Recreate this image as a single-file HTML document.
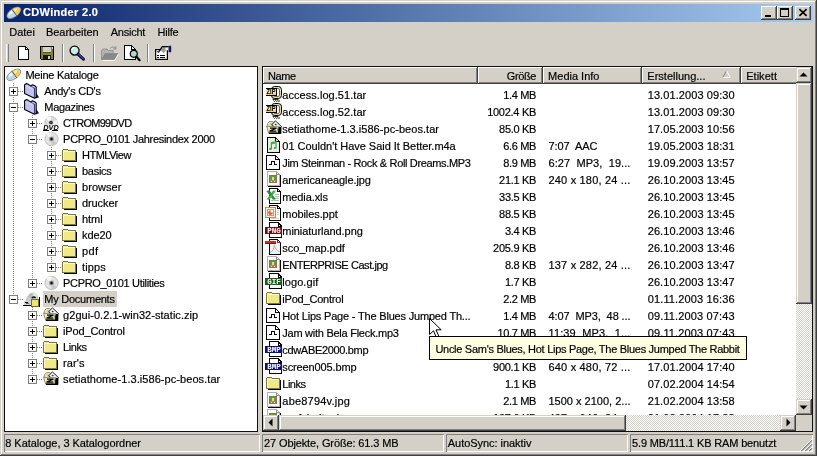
<!DOCTYPE html><html lang="de"><head><meta charset="utf-8"><title>CDWinder 2.0</title><style>

html,body{margin:0;padding:0}
body{width:817px;height:456px;background:#d4d0c8;overflow:hidden;position:relative;font:11px "Liberation Sans",sans-serif;color:#000}
.r,.t,.i{position:absolute}
.t{white-space:pre;line-height:17px;height:17px;-webkit-text-stroke:.18px}
svg{shape-rendering:crispEdges;overflow:visible}
.btn{position:absolute;background:#d4d0c8;box-shadow:inset -1px -1px #404040,inset 1px 1px #d4d0c8,inset -2px -2px #808080,inset 2px 2px #fff}
.cap{position:absolute;background:#d4d0c8;box-shadow:inset -1px -1px #404040,inset 1px 1px #fff,inset -2px -2px #808080,inset 2px 2px #d4d0c8}
.hd{position:absolute;top:67px;height:17px;background:#d4d0c8;box-shadow:inset -1px -1px #404040,inset 1px 1px #fff,inset -2px -2px #808080}
.sp{position:absolute;top:434px;height:18px;box-shadow:inset 1px 1px #808080,inset -1px -1px #fff}
.dither{position:absolute;background:repeating-conic-gradient(#fff 0 25%,#d4d0c8 0 50%) 0 0/2px 2px}
.clip{position:absolute;overflow:hidden}

</style></head><body><div id="w" style="position:absolute;left:0;top:0;width:817px;height:456px;will-change:transform">
<div class="r" style="left:0px;top:0px;width:817px;height:456px;background:#d4d0c8;"></div>
<div class="r" style="left:1px;top:1px;width:814px;height:1px;background:#fff;"></div>
<div class="r" style="left:1px;top:1px;width:1px;height:453px;background:#fff;"></div>
<div class="r" style="left:815px;top:1px;width:1px;height:454px;background:#808080;"></div>
<div class="r" style="left:1px;top:454px;width:815px;height:1px;background:#808080;"></div>
<div class="r" style="left:816px;top:0px;width:1px;height:456px;background:#404040;"></div>
<div class="r" style="left:0px;top:455px;width:817px;height:1px;background:#404040;"></div>
<div class="r" style="left:4px;top:4px;width:809px;height:18px;background:#0a246a;background:linear-gradient(90deg,#0a246a,#a6caf0)"></div>
<svg class="i" style="left:6px;top:5px" width="16" height="16" viewBox="0 0 16 16" ><g shape-rendering="auto" transform="rotate(-36 7.8 7.8)"><ellipse cx="7.8" cy="7.8" rx="8" ry="4.1" fill="#c4d4e4" stroke="#788c9e" stroke-width=".8"/><path d="M8.4 3.8A8 4.1 0 0 1 8.4 11.8Z" fill="#f0cc54"/><path d="M8.4 3.6V12" stroke="#4a4a40" stroke-width=".8"/><path d="M2 7A6 3 0 0 1 7.2 4.6L7.2 7.6Z" fill="#eef4fa"/><path d="M9.4 5.2L14 6L10 8Z" fill="#fdf0b4"/></g></svg>
<div class="cap" style="left:761px;top:6px;width:16px;height:14px"></div>
<div class="cap" style="left:777px;top:6px;width:16px;height:14px"></div>
<div class="cap" style="left:795px;top:6px;width:16px;height:14px"></div>
<div class="r" style="left:765px;top:15px;width:6px;height:2px;background:#000;"></div>
<div class="r" style="left:780px;top:8px;width:9px;height:9px;background:transparent;box-sizing:border-box;border:1px solid #000;border-top-width:2px"></div>
<svg class="i" style="left:795px;top:6px" width="16" height="14" viewBox="0 0 16 14" ><path d="M4.4 3.2L11.6 9.8M11.6 3.2L4.4 9.8" stroke="#000" stroke-width="1.7" fill="none" shape-rendering="auto"/></svg>
<div class="r" style="left:6px;top:44px;width:1px;height:18px;background:#fff;"></div>
<div class="r" style="left:7px;top:44px;width:1px;height:18px;background:#d4d0c8;"></div>
<div class="r" style="left:8px;top:44px;width:1px;height:18px;background:#808080;"></div>
<div class="r" style="left:62px;top:44px;width:1px;height:18px;background:#808080;"></div>
<div class="r" style="left:63px;top:44px;width:1px;height:18px;background:#fff;"></div>
<div class="r" style="left:93px;top:44px;width:1px;height:18px;background:#808080;"></div>
<div class="r" style="left:94px;top:44px;width:1px;height:18px;background:#fff;"></div>
<div class="r" style="left:147px;top:44px;width:1px;height:18px;background:#808080;"></div>
<div class="r" style="left:148px;top:44px;width:1px;height:18px;background:#fff;"></div>
<svg class="i" style="left:17px;top:45px" width="16" height="16" viewBox="0 0 16 16" ><path d="M1.5 1.5H8.5L11.5 4.5V14.5H1.5Z" fill="#fff" stroke="#000"/><path d="M8.5 1.5V4.5H11.5" fill="none" stroke="#000"/></svg>
<svg class="i" style="left:40px;top:46px" width="15" height="15" viewBox="0 0 15 15" ><path d="M.5 .5H13.5V13.5H1.5L.5 12.5Z" fill="#808040" stroke="#000"/><rect x="3" y="1" width="8" height="6" fill="#d4d0c8"/><rect x="3" y="6" width="8" height="1" fill="#585828"/><rect x="3" y="9" width="8" height="4" fill="#181808"/><rect x="8" y="10" width="2" height="3" fill="#d4d0c8"/><rect x="12" y="1" width="1" height="2" fill="#d4d0c8"/></svg>
<svg class="i" style="left:69px;top:44px" width="18" height="18" viewBox="0 0 18 18" ><g shape-rendering="auto"><circle cx="5.6" cy="6.6" r="4.5" fill="#c6ece6" stroke="#000" stroke-width="1.3"/><path d="M3.2 5.4A3 3 0 0 1 6.4 3.6" stroke="#fff" stroke-width="1.1" fill="none"/><path d="M9 10.2L14.4 15.2" stroke="#000" stroke-width="3" stroke-linecap="round"/><path d="M9.4 10.2L14.4 14.8" stroke="#3c3cc4" stroke-width="1.3" stroke-linecap="round"/></g></svg>
<svg class="i" style="left:101px;top:45px" width="18" height="16" viewBox="0 0 18 16" ><g shape-rendering="auto"><path d="M.5 14.5V5.5L2 4H6L7.5 5.5H12V8" fill="#b4b4b4" stroke="#909090"/><path d="M.8 14.5L4 8.5H17L13.5 14.5Z" fill="#888" stroke="#808080" stroke-width=".6"/><path d="M9 3.5C10.5 1.5 13 1.5 14.5 3.5M14.8 1.2V4H12" fill="none" stroke="#909090" stroke-width="1.1"/><path d="M1.5 15.5H13.5L17.5 9" fill="none" stroke="#fff" stroke-width=".9"/></g></svg>
<svg class="i" style="left:124px;top:44px" width="17" height="18" viewBox="0 0 17 18" ><path d="M.5 1.5H7.5L11.5 5.5V15.5H.5Z" fill="#fff" stroke="#000"/><path d="M7.5 1.5V5.5H11.5" fill="none" stroke="#000"/><g shape-rendering="auto"><circle cx="9.8" cy="9.8" r="3.5" fill="#a8dcd0" stroke="#000" stroke-width="1.2"/><path d="M12.3 12.6L15.6 16.2" stroke="#000" stroke-width="2.2" stroke-linecap="round"/></g></svg>
<svg class="i" style="left:155px;top:45px" width="17" height="16" viewBox="0 0 17 16" ><rect x=".6" y="4.6" width="11.8" height="9.8" fill="#fff" stroke="#000" stroke-width="1.2" shape-rendering="auto"/><path d="M2 10.5H4M5 10.5H10M2 12.5H4M5 12.5H10" stroke="#000"/><g shape-rendering="auto"><path d="M3.6 7.2L7.2 1.6H13.5V5L11 5.6L8.6 8.2L6.2 5.6Z" fill="#9c9c9c"/><path d="M10.4 2.4H13.6V5.2H10.4Z" fill="#ececfa"/><path d="M3.4 7.4L7.2 1.6H13.6" fill="none" stroke="#000" stroke-width="1.1"/><path d="M2 6.2L3.2 7.6" stroke="#000" stroke-width="1"/><path d="M13.6 .8H16.2V7.2H13.6Z" fill="#16164e"/></g></svg>
<div class="r" style="left:4px;top:66px;width:254px;height:366px;background:#101010;"></div>
<div class="r" style="left:5px;top:67px;width:252px;height:364px;background:#fff;"></div>
<div class="r" style="left:13px;top:83px;width:1px;height:216px;background:repeating-linear-gradient(180deg,#808080 0 1px,#fff 1px 2px)"></div>
<div class="r" style="left:32px;top:115px;width:1px;height:168px;background:repeating-linear-gradient(180deg,#808080 0 1px,#fff 1px 2px)"></div>
<div class="r" style="left:51px;top:147px;width:1px;height:120px;background:repeating-linear-gradient(180deg,#808080 0 1px,#fff 1px 2px)"></div>
<div class="r" style="left:32px;top:307px;width:1px;height:72px;background:repeating-linear-gradient(180deg,#808080 0 1px,#fff 1px 2px)"></div>
<svg class="i" style="left:6px;top:67px" width="16" height="16" viewBox="0 0 16 16" ><g shape-rendering="auto" transform="rotate(-36 7.8 7.8)"><ellipse cx="7.8" cy="7.8" rx="8" ry="4.1" fill="#c4d4e4" stroke="#788c9e" stroke-width=".8"/><path d="M8.4 3.8A8 4.1 0 0 1 8.4 11.8Z" fill="#f0cc54"/><path d="M8.4 3.6V12" stroke="#4a4a40" stroke-width=".8"/><path d="M2 7A6 3 0 0 1 7.2 4.6L7.2 7.6Z" fill="#eef4fa"/><path d="M9.4 5.2L14 6L10 8Z" fill="#fdf0b4"/></g></svg>
<div class="r" style="left:14px;top:91px;width:10px;height:1px;background:repeating-linear-gradient(90deg,#808080 0 1px,#fff 1px 2px)"></div>
<div class="r" style="left:9px;top:87px;width:9px;height:9px;background:#fff;box-sizing:border-box;border:1px solid #808080"></div>
<div class="r" style="left:11px;top:91px;width:5px;height:1px;background:#000;"></div>
<div class="r" style="left:13px;top:89px;width:1px;height:5px;background:#000;"></div>
<svg class="i" style="left:24px;top:83px" width="16" height="16" viewBox="0 0 16 16" ><g shape-rendering="auto"><path d="M12 9.5L15 14.2L11.5 15.4Z" fill="#101018"/><path d="M.6 1.8L2.6 .5L4.6 1.6L6.6 2.9L8.6 1.7L11 2.9L12.2 4.2V14.6L10.4 15.3L.6 10.6Z" fill="#c2c2f2" stroke="#000" stroke-width="1.1" stroke-linejoin="round"/><path d="M10.3 5.2V15" stroke="#181850" stroke-width="1"/><path d="M4.6 1.8L10.3 5.2" stroke="#303068" stroke-width=".7"/><path d="M1.6 3L9.4 6.4V13.4" fill="none" stroke="#dcdcfa" stroke-width=".7"/></g></svg>
<div class="r" style="left:14px;top:107px;width:10px;height:1px;background:repeating-linear-gradient(90deg,#808080 0 1px,#fff 1px 2px)"></div>
<div class="r" style="left:9px;top:103px;width:9px;height:9px;background:#fff;box-sizing:border-box;border:1px solid #808080"></div>
<div class="r" style="left:11px;top:107px;width:5px;height:1px;background:#000;"></div>
<svg class="i" style="left:24px;top:99px" width="16" height="16" viewBox="0 0 16 16" ><g shape-rendering="auto"><path d="M12 9.5L15 14.2L11.5 15.4Z" fill="#101018"/><path d="M.6 1.8L2.6 .5L4.6 1.6L6.6 2.9L8.6 1.7L11 2.9L12.2 4.2V14.6L10.4 15.3L.6 10.6Z" fill="#c2c2f2" stroke="#000" stroke-width="1.1" stroke-linejoin="round"/><path d="M10.3 5.2V15" stroke="#181850" stroke-width="1"/><path d="M4.6 1.8L10.3 5.2" stroke="#303068" stroke-width=".7"/><path d="M1.6 3L9.4 6.4V13.4" fill="none" stroke="#dcdcfa" stroke-width=".7"/></g></svg>
<div class="r" style="left:33px;top:123px;width:10px;height:1px;background:repeating-linear-gradient(90deg,#808080 0 1px,#fff 1px 2px)"></div>
<div class="r" style="left:28px;top:119px;width:9px;height:9px;background:#fff;box-sizing:border-box;border:1px solid #808080"></div>
<div class="r" style="left:30px;top:123px;width:5px;height:1px;background:#000;"></div>
<div class="r" style="left:32px;top:121px;width:1px;height:5px;background:#000;"></div>
<svg class="i" style="left:43px;top:115px" width="16" height="16" viewBox="0 0 16 16" ><g shape-rendering="auto"><circle cx="8" cy="7.6" r="6.2" fill="#dcdcdc" stroke="#b8b8b8" stroke-width=".8"/><path d="M8 7.6L3 3.6A6.5 6.5 0 0 1 8 1.2Z" fill="#f8f8f8"/><path d="M8 7.6L13.6 5A6.5 6.5 0 0 1 14 10Z" fill="#f0f0f0"/><circle cx="8" cy="7.6" r="2.1" fill="#8c8c8c"/><circle cx="8" cy="7.6" r="1.5" fill="#101010"/><circle cx="8" cy="7.6" r=".6" fill="#b0b0b0"/><rect x="0" y="9.6" width="16" height="5.8" fill="#fff" opacity=".6"/></g><text x="8" y="14.6" text-anchor="middle" font-family="Liberation Sans, sans-serif" font-size="6.8" font-weight="bold" font-style="italic" fill="#000" textLength="15.4" lengthAdjust="spacingAndGlyphs">DVD</text><rect x="0" y="15" width="6" height="1" fill="#000"/><rect x="9" y="15" width="6" height="1" fill="#000"/></svg>
<div class="r" style="left:33px;top:139px;width:10px;height:1px;background:repeating-linear-gradient(90deg,#808080 0 1px,#fff 1px 2px)"></div>
<div class="r" style="left:28px;top:135px;width:9px;height:9px;background:#fff;box-sizing:border-box;border:1px solid #808080"></div>
<div class="r" style="left:30px;top:139px;width:5px;height:1px;background:#000;"></div>
<svg class="i" style="left:43px;top:131px" width="16" height="16" viewBox="0 0 16 16" ><g shape-rendering="auto"><circle cx="8.5" cy="8" r="6.6" fill="#e2e2e2" stroke="#b4b4b4" stroke-width=".8"/><path d="M8.5 8L3 3.5A7 7 0 0 1 8.5 1.4Z" fill="#f6f6f6"/><path d="M8.5 8L14 12.5A7 7 0 0 1 8.5 14.6Z" fill="#c8c8c8"/><circle cx="8.5" cy="8" r="2.4" fill="#8c8c8c"/><circle cx="8.5" cy="8" r="1.2" fill="#101010"/></g></svg>
<div class="r" style="left:52px;top:155px;width:10px;height:1px;background:repeating-linear-gradient(90deg,#808080 0 1px,#fff 1px 2px)"></div>
<div class="r" style="left:47px;top:151px;width:9px;height:9px;background:#fff;box-sizing:border-box;border:1px solid #808080"></div>
<div class="r" style="left:49px;top:155px;width:5px;height:1px;background:#000;"></div>
<div class="r" style="left:51px;top:153px;width:1px;height:5px;background:#000;"></div>
<svg class="i" style="left:62px;top:147px" width="16" height="16" viewBox="0 0 16 16" ><path d="M.5 13.5V3.5L1.5 2.5H5.5L6.5 3.5H13.5V13.5Z" fill="#efe98c" stroke="#7c783a"/><path d="M14.5 4.5V14.5H1.5" fill="none" stroke="#000"/><path d="M1.5 12.5V4.5H12.5" fill="none" stroke="#fbf8d0"/></svg>
<div class="r" style="left:52px;top:171px;width:10px;height:1px;background:repeating-linear-gradient(90deg,#808080 0 1px,#fff 1px 2px)"></div>
<div class="r" style="left:47px;top:167px;width:9px;height:9px;background:#fff;box-sizing:border-box;border:1px solid #808080"></div>
<div class="r" style="left:49px;top:171px;width:5px;height:1px;background:#000;"></div>
<div class="r" style="left:51px;top:169px;width:1px;height:5px;background:#000;"></div>
<svg class="i" style="left:62px;top:163px" width="16" height="16" viewBox="0 0 16 16" ><path d="M.5 13.5V3.5L1.5 2.5H5.5L6.5 3.5H13.5V13.5Z" fill="#efe98c" stroke="#7c783a"/><path d="M14.5 4.5V14.5H1.5" fill="none" stroke="#000"/><path d="M1.5 12.5V4.5H12.5" fill="none" stroke="#fbf8d0"/></svg>
<div class="r" style="left:52px;top:187px;width:10px;height:1px;background:repeating-linear-gradient(90deg,#808080 0 1px,#fff 1px 2px)"></div>
<div class="r" style="left:47px;top:183px;width:9px;height:9px;background:#fff;box-sizing:border-box;border:1px solid #808080"></div>
<div class="r" style="left:49px;top:187px;width:5px;height:1px;background:#000;"></div>
<div class="r" style="left:51px;top:185px;width:1px;height:5px;background:#000;"></div>
<svg class="i" style="left:62px;top:179px" width="16" height="16" viewBox="0 0 16 16" ><path d="M.5 13.5V3.5L1.5 2.5H5.5L6.5 3.5H13.5V13.5Z" fill="#efe98c" stroke="#7c783a"/><path d="M14.5 4.5V14.5H1.5" fill="none" stroke="#000"/><path d="M1.5 12.5V4.5H12.5" fill="none" stroke="#fbf8d0"/></svg>
<div class="r" style="left:52px;top:203px;width:10px;height:1px;background:repeating-linear-gradient(90deg,#808080 0 1px,#fff 1px 2px)"></div>
<div class="r" style="left:47px;top:199px;width:9px;height:9px;background:#fff;box-sizing:border-box;border:1px solid #808080"></div>
<div class="r" style="left:49px;top:203px;width:5px;height:1px;background:#000;"></div>
<div class="r" style="left:51px;top:201px;width:1px;height:5px;background:#000;"></div>
<svg class="i" style="left:62px;top:195px" width="16" height="16" viewBox="0 0 16 16" ><path d="M.5 13.5V3.5L1.5 2.5H5.5L6.5 3.5H13.5V13.5Z" fill="#efe98c" stroke="#7c783a"/><path d="M14.5 4.5V14.5H1.5" fill="none" stroke="#000"/><path d="M1.5 12.5V4.5H12.5" fill="none" stroke="#fbf8d0"/></svg>
<div class="r" style="left:52px;top:219px;width:10px;height:1px;background:repeating-linear-gradient(90deg,#808080 0 1px,#fff 1px 2px)"></div>
<div class="r" style="left:47px;top:215px;width:9px;height:9px;background:#fff;box-sizing:border-box;border:1px solid #808080"></div>
<div class="r" style="left:49px;top:219px;width:5px;height:1px;background:#000;"></div>
<div class="r" style="left:51px;top:217px;width:1px;height:5px;background:#000;"></div>
<svg class="i" style="left:62px;top:211px" width="16" height="16" viewBox="0 0 16 16" ><path d="M.5 13.5V3.5L1.5 2.5H5.5L6.5 3.5H13.5V13.5Z" fill="#efe98c" stroke="#7c783a"/><path d="M14.5 4.5V14.5H1.5" fill="none" stroke="#000"/><path d="M1.5 12.5V4.5H12.5" fill="none" stroke="#fbf8d0"/></svg>
<div class="r" style="left:52px;top:235px;width:10px;height:1px;background:repeating-linear-gradient(90deg,#808080 0 1px,#fff 1px 2px)"></div>
<div class="r" style="left:47px;top:231px;width:9px;height:9px;background:#fff;box-sizing:border-box;border:1px solid #808080"></div>
<div class="r" style="left:49px;top:235px;width:5px;height:1px;background:#000;"></div>
<div class="r" style="left:51px;top:233px;width:1px;height:5px;background:#000;"></div>
<svg class="i" style="left:62px;top:227px" width="16" height="16" viewBox="0 0 16 16" ><path d="M.5 13.5V3.5L1.5 2.5H5.5L6.5 3.5H13.5V13.5Z" fill="#efe98c" stroke="#7c783a"/><path d="M14.5 4.5V14.5H1.5" fill="none" stroke="#000"/><path d="M1.5 12.5V4.5H12.5" fill="none" stroke="#fbf8d0"/></svg>
<div class="r" style="left:52px;top:251px;width:10px;height:1px;background:repeating-linear-gradient(90deg,#808080 0 1px,#fff 1px 2px)"></div>
<div class="r" style="left:47px;top:247px;width:9px;height:9px;background:#fff;box-sizing:border-box;border:1px solid #808080"></div>
<div class="r" style="left:49px;top:251px;width:5px;height:1px;background:#000;"></div>
<div class="r" style="left:51px;top:249px;width:1px;height:5px;background:#000;"></div>
<svg class="i" style="left:62px;top:243px" width="16" height="16" viewBox="0 0 16 16" ><path d="M.5 13.5V3.5L1.5 2.5H5.5L6.5 3.5H13.5V13.5Z" fill="#efe98c" stroke="#7c783a"/><path d="M14.5 4.5V14.5H1.5" fill="none" stroke="#000"/><path d="M1.5 12.5V4.5H12.5" fill="none" stroke="#fbf8d0"/></svg>
<div class="r" style="left:52px;top:267px;width:10px;height:1px;background:repeating-linear-gradient(90deg,#808080 0 1px,#fff 1px 2px)"></div>
<div class="r" style="left:47px;top:263px;width:9px;height:9px;background:#fff;box-sizing:border-box;border:1px solid #808080"></div>
<div class="r" style="left:49px;top:267px;width:5px;height:1px;background:#000;"></div>
<div class="r" style="left:51px;top:265px;width:1px;height:5px;background:#000;"></div>
<svg class="i" style="left:62px;top:259px" width="16" height="16" viewBox="0 0 16 16" ><path d="M.5 13.5V3.5L1.5 2.5H5.5L6.5 3.5H13.5V13.5Z" fill="#efe98c" stroke="#7c783a"/><path d="M14.5 4.5V14.5H1.5" fill="none" stroke="#000"/><path d="M1.5 12.5V4.5H12.5" fill="none" stroke="#fbf8d0"/></svg>
<div class="r" style="left:33px;top:283px;width:10px;height:1px;background:repeating-linear-gradient(90deg,#808080 0 1px,#fff 1px 2px)"></div>
<div class="r" style="left:28px;top:279px;width:9px;height:9px;background:#fff;box-sizing:border-box;border:1px solid #808080"></div>
<div class="r" style="left:30px;top:283px;width:5px;height:1px;background:#000;"></div>
<div class="r" style="left:32px;top:281px;width:1px;height:5px;background:#000;"></div>
<svg class="i" style="left:43px;top:275px" width="16" height="16" viewBox="0 0 16 16" ><g shape-rendering="auto"><circle cx="8.5" cy="8" r="6.6" fill="#e2e2e2" stroke="#b4b4b4" stroke-width=".8"/><path d="M8.5 8L3 3.5A7 7 0 0 1 8.5 1.4Z" fill="#f6f6f6"/><path d="M8.5 8L14 12.5A7 7 0 0 1 8.5 14.6Z" fill="#c8c8c8"/><circle cx="8.5" cy="8" r="2.4" fill="#8c8c8c"/><circle cx="8.5" cy="8" r="1.2" fill="#101010"/></g></svg>
<div class="r" style="left:14px;top:299px;width:10px;height:1px;background:repeating-linear-gradient(90deg,#808080 0 1px,#fff 1px 2px)"></div>
<div class="r" style="left:9px;top:295px;width:9px;height:9px;background:#fff;box-sizing:border-box;border:1px solid #808080"></div>
<div class="r" style="left:11px;top:299px;width:5px;height:1px;background:#000;"></div>
<div class="r" style="left:43px;top:291px;width:74px;height:16px;background:#d4d0c8;"></div>
<svg class="i" style="left:24px;top:291px" width="16" height="16" viewBox="0 0 16 16" ><g shape-rendering="auto"><path d="M2 9.5C2.4 4.6 6 1.4 9 1.4C11.6 1.4 13.6 3 14 5V8H7V10H2Z" fill="#c6cac6"/><path d="M8.5 7.5L9.6 1.6C11.6 1.8 13.4 3.2 13.8 5Z" fill="#e6e8e6"/><path d="M4 6C5 3.6 7 2.2 8.6 2L8 6.4Z" fill="#b4bcb4"/><path d="M7.8 7.2Q9.6 5 11.6 6.8" fill="none" stroke="#000" stroke-width="1.3"/></g><rect x="0" y="10" width="7" height="4" fill="#d2d2d2"/><rect x="-1" y="14" width="8" height="1" fill="#000"/><rect x="1" y="11" width="3" height="1" fill="#000"/><rect x="2" y="12" width="3" height="1" fill="#606060"/><path d="M7.5 15.5V8.5H14.5V15.5Z" fill="#ece66e" stroke="#6e6e34"/><path d="M15.5 6V16" stroke="#000"/></svg>
<div class="r" style="left:33px;top:315px;width:10px;height:1px;background:repeating-linear-gradient(90deg,#808080 0 1px,#fff 1px 2px)"></div>
<div class="r" style="left:28px;top:311px;width:9px;height:9px;background:#fff;box-sizing:border-box;border:1px solid #808080"></div>
<div class="r" style="left:30px;top:315px;width:5px;height:1px;background:#000;"></div>
<div class="r" style="left:32px;top:313px;width:1px;height:5px;background:#000;"></div>
<svg class="i" style="left:43px;top:307px" width="16" height="16" viewBox="0 0 16 16" ><g shape-rendering="auto"><path d="M1 7L1.6 3.4L3.4 1.6H7L8.6 3.4H12.6L13 7Z" fill="#e6e6c6" stroke="#8a8a64" stroke-width=".9"/><path d="M3 4.6L4.6 3H6.4L4.6 4.8Z" fill="#c8c890"/><path d="M9.4 .8L15.6 6.8L12.4 9.4L5.6 5Z" fill="#fff" stroke="#000" stroke-width=".9"/><path d="M9.6 3.4L11 4.8L9.8 5.6L8.4 4.6Z" fill="#2a2a98"/><path d="M12.4 6.6L15.4 7.2V13.8H12Z" fill="#000"/><path d="M.6 6.4H12.4L10.8 12.6H2.4Z" fill="#ecedb4" stroke="#7e7e58" stroke-width=".8"/><path d="M2.4 12.4H14.6V13.9H3Z" fill="#000"/><path d="M4 7.4H10.6V8.7L6.6 10.4H10.2V11.8H3.4V10.5L7.4 8.8H4Z" fill="#000"/></g></svg>
<div class="r" style="left:33px;top:331px;width:10px;height:1px;background:repeating-linear-gradient(90deg,#808080 0 1px,#fff 1px 2px)"></div>
<div class="r" style="left:28px;top:327px;width:9px;height:9px;background:#fff;box-sizing:border-box;border:1px solid #808080"></div>
<div class="r" style="left:30px;top:331px;width:5px;height:1px;background:#000;"></div>
<div class="r" style="left:32px;top:329px;width:1px;height:5px;background:#000;"></div>
<svg class="i" style="left:43px;top:323px" width="16" height="16" viewBox="0 0 16 16" ><path d="M.5 13.5V3.5L1.5 2.5H5.5L6.5 3.5H13.5V13.5Z" fill="#efe98c" stroke="#7c783a"/><path d="M14.5 4.5V14.5H1.5" fill="none" stroke="#000"/><path d="M1.5 12.5V4.5H12.5" fill="none" stroke="#fbf8d0"/></svg>
<div class="r" style="left:33px;top:347px;width:10px;height:1px;background:repeating-linear-gradient(90deg,#808080 0 1px,#fff 1px 2px)"></div>
<div class="r" style="left:28px;top:343px;width:9px;height:9px;background:#fff;box-sizing:border-box;border:1px solid #808080"></div>
<div class="r" style="left:30px;top:347px;width:5px;height:1px;background:#000;"></div>
<div class="r" style="left:32px;top:345px;width:1px;height:5px;background:#000;"></div>
<svg class="i" style="left:43px;top:339px" width="16" height="16" viewBox="0 0 16 16" ><path d="M.5 13.5V3.5L1.5 2.5H5.5L6.5 3.5H13.5V13.5Z" fill="#efe98c" stroke="#7c783a"/><path d="M14.5 4.5V14.5H1.5" fill="none" stroke="#000"/><path d="M1.5 12.5V4.5H12.5" fill="none" stroke="#fbf8d0"/></svg>
<div class="r" style="left:33px;top:363px;width:10px;height:1px;background:repeating-linear-gradient(90deg,#808080 0 1px,#fff 1px 2px)"></div>
<div class="r" style="left:28px;top:359px;width:9px;height:9px;background:#fff;box-sizing:border-box;border:1px solid #808080"></div>
<div class="r" style="left:30px;top:363px;width:5px;height:1px;background:#000;"></div>
<div class="r" style="left:32px;top:361px;width:1px;height:5px;background:#000;"></div>
<svg class="i" style="left:43px;top:355px" width="16" height="16" viewBox="0 0 16 16" ><path d="M.5 13.5V3.5L1.5 2.5H5.5L6.5 3.5H13.5V13.5Z" fill="#efe98c" stroke="#7c783a"/><path d="M14.5 4.5V14.5H1.5" fill="none" stroke="#000"/><path d="M1.5 12.5V4.5H12.5" fill="none" stroke="#fbf8d0"/></svg>
<div class="r" style="left:33px;top:379px;width:10px;height:1px;background:repeating-linear-gradient(90deg,#808080 0 1px,#fff 1px 2px)"></div>
<div class="r" style="left:28px;top:375px;width:9px;height:9px;background:#fff;box-sizing:border-box;border:1px solid #808080"></div>
<div class="r" style="left:30px;top:379px;width:5px;height:1px;background:#000;"></div>
<div class="r" style="left:32px;top:377px;width:1px;height:5px;background:#000;"></div>
<svg class="i" style="left:43px;top:371px" width="16" height="16" viewBox="0 0 16 16" ><g shape-rendering="auto"><path d="M1 7L1.6 3.4L3.4 1.6H7L8.6 3.4H12.6L13 7Z" fill="#e6e6c6" stroke="#8a8a64" stroke-width=".9"/><path d="M3 4.6L4.6 3H6.4L4.6 4.8Z" fill="#c8c890"/><path d="M9.4 .8L15.6 6.8L12.4 9.4L5.6 5Z" fill="#fff" stroke="#000" stroke-width=".9"/><path d="M9.6 3.4L11 4.8L9.8 5.6L8.4 4.6Z" fill="#2a2a98"/><path d="M12.4 6.6L15.4 7.2V13.8H12Z" fill="#000"/><path d="M.6 6.4H12.4L10.8 12.6H2.4Z" fill="#ecedb4" stroke="#7e7e58" stroke-width=".8"/><path d="M2.4 12.4H14.6V13.9H3Z" fill="#000"/><path d="M4 7.4H10.6V8.7L6.6 10.4H10.2V11.8H3.4V10.5L7.4 8.8H4Z" fill="#000"/></g></svg>
<div class="r" style="left:262px;top:66px;width:551px;height:366px;background:#101010;"></div>
<div class="r" style="left:263px;top:67px;width:549px;height:364px;background:#fff;"></div>
<div class="hd" style="left:263px;width:215px"></div>
<div class="hd" style="left:478px;width:65px"></div>
<div class="hd" style="left:543px;width:99px"></div>
<div class="hd" style="left:642px;width:99px"></div>
<div class="hd" style="left:741px;width:57px"></div>
<svg class="i" style="left:722px;top:70px" width="9" height="9" viewBox="0 0 9 9" ><g shape-rendering="auto"><path d="M4.5 .8L8.2 7.5H.8Z" fill="#d4d0c8"/><path d="M4.5 .8L.8 7.5" stroke="#808080" fill="none"/><path d="M4.5 .8L8.2 7.5H.8" stroke="#fff" fill="none"/></g></svg>
<div class="clip" style="left:264px;top:84px;width:532px;height:331px">
<svg class="i" style="left:2px;top:2px" width="16" height="16" viewBox="0 0 16 16" ><g shape-rendering="auto"><rect x="5.5" y=".5" width="10" height="12" rx="3.2" fill="#e4dea6" stroke="#000" stroke-width="1"/><rect x="7.6" y="2.5" width="5.9" height="8" rx="1.8" fill="#f4f0c8" stroke="#3c3a18" stroke-width=".8"/><rect x="11" y="3.4" width="1.6" height="6.4" fill="#fff"/><path d="M6.6 13.3H12.4" stroke="#000" stroke-width="1"/><path d="M7.4 14.5L8.5 15.5L9.6 14.5L10.7 15.5L11.8 14.5L12.9 15.5L14 14.5" fill="none" stroke="#000" stroke-width=".9"/></g><rect x="0" y="2" width="11" height="8" fill="#000"/><rect x="0" y="3" width="10" height="6" fill="#f6e8b0"/><rect x="0" y="7" width="10" height="2" fill="#e6d090"/><text x="5" y="8.3" text-anchor="middle" font-family="Liberation Sans, sans-serif" font-size="6.4" font-weight="bold" fill="#000" textLength="9" lengthAdjust="spacingAndGlyphs">ZIP</text></svg>
<svg class="i" style="left:2px;top:19px" width="16" height="16" viewBox="0 0 16 16" ><g shape-rendering="auto"><rect x="5.5" y=".5" width="10" height="12" rx="3.2" fill="#e4dea6" stroke="#000" stroke-width="1"/><rect x="7.6" y="2.5" width="5.9" height="8" rx="1.8" fill="#f4f0c8" stroke="#3c3a18" stroke-width=".8"/><rect x="11" y="3.4" width="1.6" height="6.4" fill="#fff"/><path d="M6.6 13.3H12.4" stroke="#000" stroke-width="1"/><path d="M7.4 14.5L8.5 15.5L9.6 14.5L10.7 15.5L11.8 14.5L12.9 15.5L14 14.5" fill="none" stroke="#000" stroke-width=".9"/></g><rect x="0" y="2" width="11" height="8" fill="#000"/><rect x="0" y="3" width="10" height="6" fill="#f6e8b0"/><rect x="0" y="7" width="10" height="2" fill="#e6d090"/><text x="5" y="8.3" text-anchor="middle" font-family="Liberation Sans, sans-serif" font-size="6.4" font-weight="bold" fill="#000" textLength="9" lengthAdjust="spacingAndGlyphs">ZIP</text></svg>
<svg class="i" style="left:2px;top:36px" width="16" height="16" viewBox="0 0 16 16" ><g shape-rendering="auto"><path d="M1 7L1.6 3.4L3.4 1.6H7L8.6 3.4H12.6L13 7Z" fill="#e6e6c6" stroke="#8a8a64" stroke-width=".9"/><path d="M3 4.6L4.6 3H6.4L4.6 4.8Z" fill="#c8c890"/><path d="M9.4 .8L15.6 6.8L12.4 9.4L5.6 5Z" fill="#fff" stroke="#000" stroke-width=".9"/><path d="M9.6 3.4L11 4.8L9.8 5.6L8.4 4.6Z" fill="#2a2a98"/><path d="M12.4 6.6L15.4 7.2V13.8H12Z" fill="#000"/><path d="M.6 6.4H12.4L10.8 12.6H2.4Z" fill="#ecedb4" stroke="#7e7e58" stroke-width=".8"/><path d="M2.4 12.4H14.6V13.9H3Z" fill="#000"/><path d="M4 7.4H10.6V8.7L6.6 10.4H10.2V11.8H3.4V10.5L7.4 8.8H4Z" fill="#000"/></g></svg>
<svg class="i" style="left:2px;top:53px" width="16" height="16" viewBox="0 0 16 16" ><path d="M1.5 .5H9.5L13.5 4.5V15.5H1.5Z" fill="#e4f2e0" stroke="#000"/><path d="M9.5 .5V4.5H13.5" fill="none" stroke="#000"/><g shape-rendering="auto"><path d="M5.4 11.8V5.8L10 4.6V10.8" fill="none" stroke="#4ca04c" stroke-width="1.2"/><path d="M5.4 7L10 5.8" stroke="#4ca04c" stroke-width="1"/><ellipse cx="4.5" cy="11.9" rx="1.5" ry="1.1" fill="#4ca04c"/><ellipse cx="9.1" cy="11" rx="1.5" ry="1.1" fill="#4ca04c"/></g></svg>
<svg class="i" style="left:2px;top:70px" width="16" height="16" viewBox="0 0 16 16" ><path d="M.5 1.5H9.5L13.5 5.5V15.5H.5Z" fill="#fff" stroke="#000"/><path d="M9.5 1.5V5.5H13.5" fill="none" stroke="#000"/><path d="M3 10.5H5.5V7.5H8.5V10.5H11" fill="none" stroke="#000"/></svg>
<svg class="i" style="left:2px;top:87px" width="16" height="16" viewBox="0 0 16 16" ><path d="M1.5 .5H10.5L13.5 3.5V14.5H1.5Z" fill="#fff" stroke="#b0b0b0"/><path d="M14.5 4V15.5H2" fill="none" stroke="#000"/><path d="M10.5 .5V3.5H13.5" fill="none" stroke="#909090"/><rect x="3" y="4" width="8" height="8" fill="#9c6a4c"/><rect x="4" y="5" width="6" height="4" fill="#58a040"/><rect x="6" y="6" width="2" height="3" fill="#d8e870"/><rect x="4" y="9" width="6" height="2" fill="#b08060"/><rect x="5" y="10" width="1" height="1" fill="#f0e0c0"/><rect x="8" y="10" width="1" height="1" fill="#f0e0c0"/></svg>
<svg class="i" style="left:2px;top:104px" width="16" height="16" viewBox="0 0 16 16" ><path d="M3.5 .5H11.5L14.5 3.5V15.5H3.5Z" fill="#fff" stroke="#000"/><path d="M11.5 .5V3.5H14.5" fill="none" stroke="#000"/><path d="M9 6.5H13M9 8.5H13M9 10.5H13M5 12.5H13" stroke="#a8c8a8"/><g shape-rendering="auto"><path d="M.5 3L3.5 2.6L9.8 11.2L7 11.8Z" fill="#2e8c3c"/><path d="M7.2 2.4L10 2.8L3.4 11.8L.4 11.4Z" fill="#4cae58"/><path d="M.5 3L3.5 2.6L6 6L4.4 8Z" fill="#2e8c3c"/></g></svg>
<svg class="i" style="left:2px;top:121px" width="16" height="16" viewBox="0 0 16 16" ><path d="M3.5 .5H11.5L14.5 3.5V15.5H3.5Z" fill="#fff" stroke="#000"/><path d="M11.5 .5V3.5H14.5" fill="none" stroke="#000"/><path d="M11 5.5H13M11 7.5H13M11 9.5H13M5 13.5H13" stroke="#d0d0d0"/><rect x="-.5" y="2.5" width="10" height="10" fill="#fbeee0" stroke="#c48858"/><rect x="1.5" y="4.5" width="6" height="6" fill="#fff8f0" stroke="#cc9a70"/><g shape-rendering="auto"><path d="M4.5 7.5V5.2A2.4 2.4 0 1 0 6.9 7.5Z" fill="#c4703c"/></g></svg>
<svg class="i" style="left:2px;top:138px" width="16" height="16" viewBox="0 0 16 16" ><path d="M3.5 .5H12L15.5 4V15.5H3.5Z" fill="#fff" stroke="#000"/><path d="M12 .5V4H15.5" fill="none" stroke="#000"/><rect x="-1" y="5" width="17" height="7" fill="#700c14"/><text x="8" y="11" text-anchor="middle" font-family="Liberation Mono, monospace" font-size="6.5" font-weight="bold" fill="#fff" textLength="13.5" lengthAdjust="spacingAndGlyphs">PNG</text></svg>
<svg class="i" style="left:2px;top:155px" width="16" height="16" viewBox="0 0 16 16" ><path d="M3.5 .5H11.5L14.5 3.5V15.5H3.5Z" fill="#f2f2f2" stroke="#000"/><path d="M11.5 .5V3.5H14.5" fill="none" stroke="#b02020"/><g shape-rendering="auto"><path d="M4.5 13.5C7 12 8 9 8.4 6C9 9.5 11 12 13.5 12.6" fill="none" stroke="#b4b4b4" stroke-width="1"/></g><rect x="-1" y="2" width="11" height="3" fill="#d42a1a"/><rect x="-1" y="4" width="11" height="1" fill="#86140a"/></svg>
<svg class="i" style="left:2px;top:172px" width="16" height="16" viewBox="0 0 16 16" ><path d="M1.5 .5H10.5L13.5 3.5V14.5H1.5Z" fill="#fff" stroke="#b0b0b0"/><path d="M14.5 4V15.5H2" fill="none" stroke="#000"/><path d="M10.5 .5V3.5H13.5" fill="none" stroke="#909090"/><rect x="3" y="4" width="8" height="8" fill="#9c6a4c"/><rect x="4" y="5" width="6" height="4" fill="#58a040"/><rect x="6" y="6" width="2" height="3" fill="#d8e870"/><rect x="4" y="9" width="6" height="2" fill="#b08060"/><rect x="5" y="10" width="1" height="1" fill="#f0e0c0"/><rect x="8" y="10" width="1" height="1" fill="#f0e0c0"/></svg>
<svg class="i" style="left:2px;top:189px" width="16" height="16" viewBox="0 0 16 16" ><path d="M3.5 .5H12L15.5 4V15.5H3.5Z" fill="#fff" stroke="#000"/><path d="M12 .5V4H15.5" fill="none" stroke="#000"/><rect x="-1" y="5" width="17" height="7" fill="#186018"/><text x="8" y="11" text-anchor="middle" font-family="Liberation Mono, monospace" font-size="6.5" font-weight="bold" fill="#fff" textLength="13.5" lengthAdjust="spacingAndGlyphs">GIF</text></svg>
<svg class="i" style="left:2px;top:206px" width="16" height="16" viewBox="0 0 16 16" ><path d="M.5 13.5V3.5L1.5 2.5H5.5L6.5 3.5H13.5V13.5Z" fill="#efe98c" stroke="#7c783a"/><path d="M14.5 4.5V14.5H1.5" fill="none" stroke="#000"/><path d="M1.5 12.5V4.5H12.5" fill="none" stroke="#fbf8d0"/></svg>
<svg class="i" style="left:2px;top:223px" width="16" height="16" viewBox="0 0 16 16" ><path d="M.5 1.5H9.5L13.5 5.5V15.5H.5Z" fill="#fff" stroke="#000"/><path d="M9.5 1.5V5.5H13.5" fill="none" stroke="#000"/><path d="M3 10.5H5.5V7.5H8.5V10.5H11" fill="none" stroke="#000"/></svg>
<svg class="i" style="left:2px;top:240px" width="16" height="16" viewBox="0 0 16 16" ><path d="M.5 1.5H9.5L13.5 5.5V15.5H.5Z" fill="#fff" stroke="#000"/><path d="M9.5 1.5V5.5H13.5" fill="none" stroke="#000"/><path d="M3 10.5H5.5V7.5H8.5V10.5H11" fill="none" stroke="#000"/></svg>
<svg class="i" style="left:2px;top:257px" width="16" height="16" viewBox="0 0 16 16" ><path d="M3.5 .5H12L15.5 4V15.5H3.5Z" fill="#fff" stroke="#000"/><path d="M12 .5V4H15.5" fill="none" stroke="#000"/><rect x="-1" y="5" width="17" height="7" fill="#10107c"/><text x="8" y="11" text-anchor="middle" font-family="Liberation Mono, monospace" font-size="6.5" font-weight="bold" fill="#fff" textLength="13.5" lengthAdjust="spacingAndGlyphs">BMP</text></svg>
<svg class="i" style="left:2px;top:274px" width="16" height="16" viewBox="0 0 16 16" ><path d="M3.5 .5H12L15.5 4V15.5H3.5Z" fill="#fff" stroke="#000"/><path d="M12 .5V4H15.5" fill="none" stroke="#000"/><rect x="-1" y="5" width="17" height="7" fill="#10107c"/><text x="8" y="11" text-anchor="middle" font-family="Liberation Mono, monospace" font-size="6.5" font-weight="bold" fill="#fff" textLength="13.5" lengthAdjust="spacingAndGlyphs">BMP</text></svg>
<svg class="i" style="left:2px;top:291px" width="16" height="16" viewBox="0 0 16 16" ><path d="M.5 13.5V3.5L1.5 2.5H5.5L6.5 3.5H13.5V13.5Z" fill="#efe98c" stroke="#7c783a"/><path d="M14.5 4.5V14.5H1.5" fill="none" stroke="#000"/><path d="M1.5 12.5V4.5H12.5" fill="none" stroke="#fbf8d0"/></svg>
<svg class="i" style="left:2px;top:308px" width="16" height="16" viewBox="0 0 16 16" ><path d="M1.5 .5H10.5L13.5 3.5V14.5H1.5Z" fill="#fff" stroke="#b0b0b0"/><path d="M14.5 4V15.5H2" fill="none" stroke="#000"/><path d="M10.5 .5V3.5H13.5" fill="none" stroke="#909090"/><rect x="3" y="4" width="8" height="8" fill="#9c6a4c"/><rect x="4" y="5" width="6" height="4" fill="#58a040"/><rect x="6" y="6" width="2" height="3" fill="#d8e870"/><rect x="4" y="9" width="6" height="2" fill="#b08060"/><rect x="5" y="10" width="1" height="1" fill="#f0e0c0"/><rect x="8" y="10" width="1" height="1" fill="#f0e0c0"/></svg>
<svg class="i" style="left:2px;top:325px" width="16" height="16" viewBox="0 0 16 16" ><path d="M1.5 .5H10.5L13.5 3.5V14.5H1.5Z" fill="#fff" stroke="#b0b0b0"/><path d="M14.5 4V15.5H2" fill="none" stroke="#000"/><path d="M10.5 .5V3.5H13.5" fill="none" stroke="#909090"/><rect x="3" y="4" width="8" height="8" fill="#9c6a4c"/><rect x="4" y="5" width="6" height="4" fill="#58a040"/><rect x="6" y="6" width="2" height="3" fill="#d8e870"/><rect x="4" y="9" width="6" height="2" fill="#b08060"/><rect x="5" y="10" width="1" height="1" fill="#f0e0c0"/><rect x="8" y="10" width="1" height="1" fill="#f0e0c0"/></svg>
<div class="r" style="left:-264px;top:-84px"><span class="t" style="top:87px;left:282.30px;letter-spacing:0.050px;">access.log.51.tar</span></div>
<div class="r" style="left:-264px;top:-84px"><span class="t" style="top:87px;left:503.34px;letter-spacing:-0.360px;">1.4 MB</span></div>
<div class="r" style="left:-264px;top:-84px"><span class="t" style="top:87px;left:647.70px;letter-spacing:0.085px;">13.01.2003 09:30</span></div>
<div class="r" style="left:-264px;top:-84px"><span class="t" style="top:104px;left:282.30px;letter-spacing:0.050px;">access.log.52.tar</span></div>
<div class="r" style="left:-264px;top:-84px"><span class="t" style="top:104px;left:487.14px;letter-spacing:-0.264px;">1002.4 KB</span></div>
<div class="r" style="left:-264px;top:-84px"><span class="t" style="top:104px;left:647.70px;letter-spacing:0.085px;">13.01.2003 09:30</span></div>
<div class="r" style="left:-264px;top:-84px"><span class="t" style="top:121px;left:282.30px;letter-spacing:0.045px;">setiathome-1.3.i586-pc-beos.tar</span></div>
<div class="r" style="left:-264px;top:-84px"><span class="t" style="top:121px;left:499.09px;letter-spacing:-0.306px;">85.0 KB</span></div>
<div class="r" style="left:-264px;top:-84px"><span class="t" style="top:121px;left:647.70px;letter-spacing:0.085px;">17.05.2003 10:56</span></div>
<div class="r" style="left:-264px;top:-84px"><span class="t" style="top:138px;left:282.30px;letter-spacing:-0.033px;">01 Couldn&#x27;t Have Said It Better.m4a</span></div>
<div class="r" style="left:-264px;top:-84px"><span class="t" style="top:138px;left:503.34px;letter-spacing:-0.360px;">6.6 MB</span></div>
<div class="r" style="left:-264px;top:-84px"><span class="t" style="top:138px;left:548.50px;letter-spacing:-0.061px;">7:07  AAC</span></div>
<div class="r" style="left:-264px;top:-84px"><span class="t" style="top:138px;left:647.70px;letter-spacing:0.085px;">19.05.2003 18:31</span></div>
<div class="r" style="left:-264px;top:-84px"><span class="t" style="top:155px;left:282.30px;letter-spacing:-0.349px;">Jim Steinman - Rock &amp; Roll Dreams.MP3</span></div>
<div class="r" style="left:-264px;top:-84px"><span class="t" style="top:155px;left:503.34px;letter-spacing:-0.360px;">8.9 MB</span></div>
<div class="r" style="left:-264px;top:-84px"><span class="t" style="top:155px;left:548.50px;letter-spacing:0.075px;">6:27  MP3,  19...</span></div>
<div class="r" style="left:-264px;top:-84px"><span class="t" style="top:155px;left:647.70px;letter-spacing:0.085px;">19.09.2003 13:57</span></div>
<div class="r" style="left:-264px;top:-84px"><span class="t" style="top:172px;left:282.30px;letter-spacing:-0.076px;">americaneagle.jpg</span></div>
<div class="r" style="left:-264px;top:-84px"><span class="t" style="top:172px;left:499.09px;letter-spacing:-0.306px;">21.1 KB</span></div>
<div class="r" style="left:-264px;top:-84px"><span class="t" style="top:172px;left:548.50px;letter-spacing:0.183px;">240 x 180, 24 ...</span></div>
<div class="r" style="left:-264px;top:-84px"><span class="t" style="top:172px;left:647.70px;letter-spacing:0.085px;">26.10.2003 13:45</span></div>
<div class="r" style="left:-264px;top:-84px"><span class="t" style="top:189px;left:282.30px;letter-spacing:-0.108px;">media.xls</span></div>
<div class="r" style="left:-264px;top:-84px"><span class="t" style="top:189px;left:499.09px;letter-spacing:-0.306px;">33.5 KB</span></div>
<div class="r" style="left:-264px;top:-84px"><span class="t" style="top:189px;left:647.70px;letter-spacing:0.085px;">26.10.2003 13:45</span></div>
<div class="r" style="left:-264px;top:-84px"><span class="t" style="top:206px;left:282.30px;letter-spacing:-0.079px;">mobiles.ppt</span></div>
<div class="r" style="left:-264px;top:-84px"><span class="t" style="top:206px;left:499.09px;letter-spacing:-0.306px;">88.5 KB</span></div>
<div class="r" style="left:-264px;top:-84px"><span class="t" style="top:206px;left:647.70px;letter-spacing:0.085px;">26.10.2003 13:45</span></div>
<div class="r" style="left:-264px;top:-84px"><span class="t" style="top:223px;left:282.30px;letter-spacing:-0.053px;">miniaturland.png</span></div>
<div class="r" style="left:-264px;top:-84px"><span class="t" style="top:223px;left:505.06px;letter-spacing:-0.339px;">3.4 KB</span></div>
<div class="r" style="left:-264px;top:-84px"><span class="t" style="top:223px;left:647.70px;letter-spacing:0.085px;">26.10.2003 13:46</span></div>
<div class="r" style="left:-264px;top:-84px"><span class="t" style="top:240px;left:282.30px;letter-spacing:-0.053px;">sco_map.pdf</span></div>
<div class="r" style="left:-264px;top:-84px"><span class="t" style="top:240px;left:493.12px;letter-spacing:-0.283px;">205.9 KB</span></div>
<div class="r" style="left:-264px;top:-84px"><span class="t" style="top:240px;left:647.70px;letter-spacing:0.085px;">26.10.2003 13:46</span></div>
<div class="r" style="left:-264px;top:-84px"><span class="t" style="top:257px;left:282.30px;letter-spacing:-0.432px;">ENTERPRISE Cast.jpg</span></div>
<div class="r" style="left:-264px;top:-84px"><span class="t" style="top:257px;left:505.06px;letter-spacing:-0.339px;">8.8 KB</span></div>
<div class="r" style="left:-264px;top:-84px"><span class="t" style="top:257px;left:548.50px;letter-spacing:0.183px;">137 x 282, 24 ...</span></div>
<div class="r" style="left:-264px;top:-84px"><span class="t" style="top:257px;left:647.70px;letter-spacing:0.085px;">26.10.2003 13:47</span></div>
<div class="r" style="left:-264px;top:-84px"><span class="t" style="top:274px;left:282.30px;letter-spacing:0.064px;">logo.gif</span></div>
<div class="r" style="left:-264px;top:-84px"><span class="t" style="top:274px;left:505.06px;letter-spacing:-0.339px;">1.7 KB</span></div>
<div class="r" style="left:-264px;top:-84px"><span class="t" style="top:274px;left:647.70px;letter-spacing:0.085px;">26.10.2003 13:47</span></div>
<div class="r" style="left:-264px;top:-84px"><span class="t" style="top:291px;left:282.30px;letter-spacing:-0.208px;">iPod_Control</span></div>
<div class="r" style="left:-264px;top:-84px"><span class="t" style="top:291px;left:503.34px;letter-spacing:-0.360px;">2.2 MB</span></div>
<div class="r" style="left:-264px;top:-84px"><span class="t" style="top:291px;left:647.70px;letter-spacing:0.136px;">01.11.2003 16:36</span></div>
<div class="r" style="left:-264px;top:-84px"><span class="t" style="top:308px;left:282.30px;letter-spacing:-0.186px;">Hot Lips Page - The Blues Jumped Th...</span></div>
<div class="r" style="left:-264px;top:-84px"><span class="t" style="top:308px;left:503.34px;letter-spacing:-0.360px;">1.4 MB</span></div>
<div class="r" style="left:-264px;top:-84px"><span class="t" style="top:308px;left:548.50px;letter-spacing:-0.099px;">4:07  MP3,  48 ...</span></div>
<div class="r" style="left:-264px;top:-84px"><span class="t" style="top:308px;left:647.70px;letter-spacing:0.136px;">09.11.2003 07:43</span></div>
<div class="r" style="left:-264px;top:-84px"><span class="t" style="top:325px;left:282.30px;letter-spacing:-0.259px;">Jam with Bela Fleck.mp3</span></div>
<div class="r" style="left:-264px;top:-84px"><span class="t" style="top:325px;left:497.38px;letter-spacing:-0.324px;">10.7 MB</span></div>
<div class="r" style="left:-264px;top:-84px"><span class="t" style="top:325px;left:548.50px;letter-spacing:0.123px;">11:39  MP3,  1...</span></div>
<div class="r" style="left:-264px;top:-84px"><span class="t" style="top:325px;left:647.70px;letter-spacing:0.136px;">09.11.2003 07:43</span></div>
<div class="r" style="left:-264px;top:-84px"><span class="t" style="top:342px;left:282.30px;letter-spacing:-0.329px;">cdwABE2000.bmp</span></div>
<div class="r" style="left:-264px;top:-84px"><span class="t" style="top:342px;left:503.34px;letter-spacing:-0.360px;">1.2 MB</span></div>
<div class="r" style="left:-264px;top:-84px"><span class="t" style="top:342px;left:548.50px;letter-spacing:0.183px;">800 x 500, 24 ...</span></div>
<div class="r" style="left:-264px;top:-84px"><span class="t" style="top:342px;left:647.70px;letter-spacing:0.085px;">17.01.2004 17:38</span></div>
<div class="r" style="left:-264px;top:-84px"><span class="t" style="top:359px;left:282.30px;letter-spacing:-0.118px;">screen005.bmp</span></div>
<div class="r" style="left:-264px;top:-84px"><span class="t" style="top:359px;left:493.12px;letter-spacing:-0.283px;">900.1 KB</span></div>
<div class="r" style="left:-264px;top:-84px"><span class="t" style="top:359px;left:548.50px;letter-spacing:0.183px;">640 x 480, 72 ...</span></div>
<div class="r" style="left:-264px;top:-84px"><span class="t" style="top:359px;left:647.70px;letter-spacing:0.085px;">17.01.2004 17:40</span></div>
<div class="r" style="left:-264px;top:-84px"><span class="t" style="top:376px;left:282.30px;letter-spacing:-0.517px;">Links</span></div>
<div class="r" style="left:-264px;top:-84px"><span class="t" style="top:376px;left:505.06px;letter-spacing:-0.339px;">1.1 KB</span></div>
<div class="r" style="left:-264px;top:-84px"><span class="t" style="top:376px;left:647.70px;letter-spacing:0.085px;">07.02.2004 14:54</span></div>
<div class="r" style="left:-264px;top:-84px"><span class="t" style="top:393px;left:282.30px;letter-spacing:0.212px;">abe8794v.jpg</span></div>
<div class="r" style="left:-264px;top:-84px"><span class="t" style="top:393px;left:503.34px;letter-spacing:-0.360px;">2.1 MB</span></div>
<div class="r" style="left:-264px;top:-84px"><span class="t" style="top:393px;left:548.50px;letter-spacing:0.003px;">1500 x 2100, 2...</span></div>
<div class="r" style="left:-264px;top:-84px"><span class="t" style="top:393px;left:647.70px;letter-spacing:0.085px;">21.02.2004 13:58</span></div>
<div class="r" style="left:-264px;top:-84px"><span class="t" style="top:410px;left:282.30px;">roofshelter.jpg</span></div>
<div class="r" style="left:-264px;top:-84px"><span class="t" style="top:410px;left:493.12px;letter-spacing:-0.283px;">137.0 KB</span></div>
<div class="r" style="left:-264px;top:-84px"><span class="t" style="top:410px;left:548.50px;letter-spacing:0.183px;">497 x 640, 24 ...</span></div>
<div class="r" style="left:-264px;top:-84px"><span class="t" style="top:410px;left:647.70px;letter-spacing:0.085px;">21.02.2004 17:22</span></div>
</div>
<div class="dither" style="left:796px;top:67px;width:16px;height:348px"></div>
<div class="btn" style="left:796px;top:67px;width:16px;height:16px"></div>
<div class="btn" style="left:796px;top:83px;width:16px;height:221px"></div>
<div class="btn" style="left:796px;top:399px;width:16px;height:16px"></div>
<svg class="i" style="left:800px;top:72px" width="8" height="5" viewBox="0 0 8 5" ><path d="M3.5 0.5L7.5 4.5H-.5Z" fill="#000" shape-rendering="auto"/></svg>
<svg class="i" style="left:800px;top:405px" width="8" height="5" viewBox="0 0 8 5" ><path d="M-.5 .5H7.5L3.5 4.5Z" fill="#000" shape-rendering="auto"/></svg>
<div class="dither" style="left:263px;top:415px;width:533px;height:16px"></div>
<div class="btn" style="left:263px;top:415px;width:16px;height:16px"></div>
<div class="btn" style="left:279px;top:415px;width:347px;height:16px"></div>
<div class="btn" style="left:780px;top:415px;width:16px;height:16px"></div>
<svg class="i" style="left:268px;top:419px" width="5" height="8" viewBox="0 0 5 8" ><path d="M4.5 -.5V7.5L.5 3.5Z" fill="#000" shape-rendering="auto"/></svg>
<svg class="i" style="left:786px;top:419px" width="5" height="8" viewBox="0 0 5 8" ><path d="M.5 -.5V7.5L4.5 3.5Z" fill="#000" shape-rendering="auto"/></svg>
<div class="r" style="left:796px;top:415px;width:16px;height:16px;background:#d4d0c8;"></div>
<div class="sp" style="left:4px;width:256px"></div>
<div class="sp" style="left:262px;width:182px"></div>
<div class="sp" style="left:446px;width:182px"></div>
<div class="sp" style="left:630px;width:183px"></div>
<svg class="i" style="left:800px;top:439px" width="13" height="13" viewBox="0 0 13 13" ><g shape-rendering="auto"><path d="M12 1L1 12M12 5L5 12M12 9L9 12" stroke="#808080" stroke-width="1.4"/><path d="M12 0L0 12M12 4L4 12M12 8L8 12" stroke="#fff" stroke-width=".9"/></g></svg>
<svg class="i" style="left:429px;top:318px" width="14" height="22" viewBox="0 0 14 22" ><path d="M.5 .5V16.5L4.5 12.8L7.6 20.2L10.2 19L7 11.8H12.2Z" fill="#fff" stroke="#000" shape-rendering="auto"/></svg>
<div class="r" style="left:429px;top:336px;width:318px;height:24px;background:#ffffe1;box-sizing:border-box;border:1px solid #000"></div>
<span class="t" style="top:4px;left:23.00px;letter-spacing:0.323px;font-weight:bold;color:#fff">CDWinder 2.0</span>
<span class="t" style="top:24px;left:9.30px;letter-spacing:-0.017px;">Datei</span>
<span class="t" style="top:24px;left:46.00px;letter-spacing:-0.062px;">Bearbeiten</span>
<span class="t" style="top:24px;left:110.70px;letter-spacing:-0.225px;">Ansicht</span>
<span class="t" style="top:24px;left:157.60px;letter-spacing:-0.243px;">Hilfe</span>
<span class="t" style="top:67px;left:25.40px;letter-spacing:-0.232px;">Meine Kataloge</span>
<span class="t" style="top:83px;left:44.30px;letter-spacing:-0.256px;">Andy&#x27;s CD&#x27;s</span>
<span class="t" style="top:99px;left:44.30px;letter-spacing:-0.334px;">Magazines</span>
<span class="t" style="top:115px;left:63.10px;letter-spacing:-0.750px;">CTROM99DVD</span>
<span class="t" style="top:131px;left:63.10px;letter-spacing:-0.289px;">PCPRO_0101 Jahresindex 2000</span>
<span class="t" style="top:147px;left:82.00px;letter-spacing:-0.485px;">HTMLView</span>
<span class="t" style="top:163px;left:82.00px;letter-spacing:-0.281px;">basics</span>
<span class="t" style="top:179px;left:82.00px;letter-spacing:0.054px;">browser</span>
<span class="t" style="top:195px;left:82.00px;letter-spacing:-0.098px;">drucker</span>
<span class="t" style="top:211px;left:82.00px;letter-spacing:-0.045px;">html</span>
<span class="t" style="top:227px;left:82.00px;letter-spacing:-0.097px;">kde20</span>
<span class="t" style="top:243px;left:82.00px;letter-spacing:0.434px;">pdf</span>
<span class="t" style="top:259px;left:82.00px;letter-spacing:0.130px;">tipps</span>
<span class="t" style="top:275px;left:63.10px;letter-spacing:-0.341px;">PCPRO_0101 Utilities</span>
<span class="t" style="top:291px;left:44.30px;letter-spacing:-0.247px;">My Documents</span>
<span class="t" style="top:307px;left:63.10px;letter-spacing:0.043px;">g2gui-0.2.1-win32-static.zip</span>
<span class="t" style="top:323px;left:63.10px;letter-spacing:-0.166px;">iPod_Control</span>
<span class="t" style="top:339px;left:63.10px;letter-spacing:-0.458px;">Links</span>
<span class="t" style="top:355px;left:63.10px;letter-spacing:0.091px;">rar&#x27;s</span>
<span class="t" style="top:371px;left:63.10px;letter-spacing:0.061px;">setiathome-1.3.i586-pc-beos.tar</span>
<span class="t" style="top:68px;left:267.90px;letter-spacing:-0.411px;">Name</span>
<span class="t" style="top:68px;left:506.80px;letter-spacing:-0.398px;">Größe</span>
<span class="t" style="top:68px;left:548.10px;letter-spacing:0.002px;">Media Info</span>
<span class="t" style="top:68px;left:647.30px;letter-spacing:0.008px;">Erstellung...</span>
<span class="t" style="top:68px;left:746.20px;letter-spacing:0.032px;">Etikett</span>
<span class="t" style="top:435px;left:5.30px;letter-spacing:-0.052px;">8 Kataloge, 3 Katalogordner</span>
<span class="t" style="top:435px;left:264.00px;letter-spacing:-0.118px;">27 Objekte, Größe: 61.3 MB</span>
<span class="t" style="top:435px;left:447.80px;letter-spacing:-0.046px;">AutoSync: inaktiv</span>
<span class="t" style="top:435px;left:632.00px;letter-spacing:-0.147px;">5.9 MB/111.1 KB RAM benutzt</span>
<span class="t" style="top:341px;left:435.40px;letter-spacing:-0.283px;">Uncle Sam&#x27;s Blues, Hot Lips Page, The Blues Jumped The Rabbit</span>
</div></body></html>
